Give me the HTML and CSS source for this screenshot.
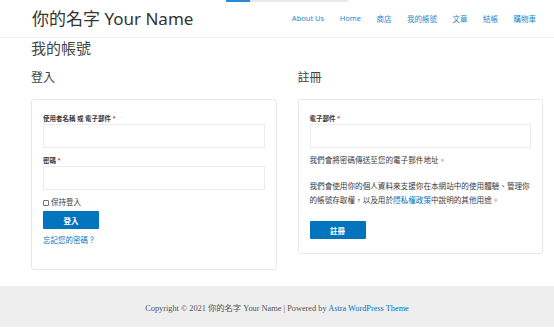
FILE: index.html
```html
<!DOCTYPE html>
<html>
    <head>
        <title>我的帳號 - 你的名字 Your Name</title>
        <meta charset="UTF-8">
        <meta name="viewport" content="width=device-width, initial-scale=1.0">
        <link rel="stylesheet" href="styles.css">
    </head>
    <body>
        <div class="top-progress">
            <span class="progress-done"></span>
            <span class="progress-rest"></span>
        </div>

        <header class="site-header">
            <a class="site-title" href="#">你的名字 Your Name</a>
            <nav class="main-nav">
                <a href="#">About Us</a>
                <a href="#">Home</a>
                <a href="#">商店</a>
                <a href="#">我的帳號</a>
                <a href="#">文章</a>
                <a href="#">結帳</a>
                <a href="#">購物車</a>
            </nav>
        </header>

        <main class="content">
            <h1 class="page-title">我的帳號</h1>

            <div class="account-cols">
                <section class="account-col">
                    <h2>登入</h2>
                    <form class="account-card">
                        <label>使用者名稱 或 電子郵件 <span class="required">*</span></label>
                        <input type="text" class="field">
                        <label>密碼 <span class="required">*</span></label>
                        <input type="password" class="field">
                        <div class="remember">
                            <input type="checkbox">
                            <span>保持登入</span>
                        </div>
                        <button type="button">登入</button>
                        <p class="lost-password"><a href="#">忘記您的密碼？</a></p>
                    </form>
                </section>

                <section class="account-col">
                    <h2>註冊</h2>
                    <form class="account-card">
                        <label>電子郵件 <span class="required">*</span></label>
                        <input type="email" class="field">
                        <p class="note">我們會將密碼傳送至您的電子郵件地址。</p>
                        <p class="privacy">我們會使用你的個人資料來支援你在本網站中的使用體驗、管理你的帳號存取權，以及用於<a href="#">隱私權政策</a>中說明的其他用途。</p>
                        <button type="button" class="register-btn">註冊</button>
                    </form>
                </section>
            </div>
        </main>

        <footer class="site-footer">
            <p>Copyright © 2021 你的名字 Your Name | Powered by <a href="#">Astra WordPress Theme</a></p>
        </footer>
    </body>
</html>
```

FILE: styles.css
```css
:root {
    --link-color: #0274be;
    --text-color: #3a3a3a;
    --border-color: #e8e8e8;
}

* {
    box-sizing: border-box;
    margin: 0;
    padding: 0;
}

body {
    font-family: 'Liberation Serif', 'Noto Sans CJK TC', serif;
    color: var(--text-color);
    background: #fff;
    font-size: 8px;
}

a {
    color: var(--link-color);
    text-decoration: none;
}

.top-progress {
    position: absolute;
    top: 0;
    left: 226px;
    display: flex;
    height: 2px;
}

.progress-done {
    width: 24px;
    background: #2b8ad8;
}

.progress-rest {
    width: 98px;
    background: #e9e9e9;
}

.site-header {
    display: flex;
    align-items: center;
    justify-content: space-between;
    height: 38px;
    padding: 0 18px 0 32px;
    border-bottom: 1px solid #efefef;
}

.site-title {
    font-family: 'Noto Sans', 'Noto Sans CJK TC', sans-serif;
    font-size: 17px;
    color: #333;
    line-height: 1;
}

.main-nav {
    display: flex;
    gap: 15.5px;
    font-family: 'Noto Sans', 'Noto Sans CJK TC', sans-serif;
    font-size: 7.5px;
}

.main-nav a {
    color: #2a87c9;
}

.content {
    padding: 0 11px 0 31px;
}

.page-title {
    font-family: 'Noto Sans CJK TC', sans-serif;
    font-weight: 400;
    font-size: 15px;
    line-height: 20px;
    color: #444;
}

.account-cols {
    display: grid;
    grid-template-columns: 1fr 1fr;
    gap: 21px;
    align-items: start;
}

.account-col h2 {
    font-family: 'Noto Sans CJK TC', sans-serif;
    font-weight: 400;
    font-size: 12px;
    line-height: 16px;
    margin: 11px 0 14px;
    color: #444;
}

.account-card {
    display: flex;
    flex-direction: column;
    align-items: flex-start;
    border: 1px solid var(--border-color);
    border-radius: 3px;
    padding: 13px 11px 14px;
}

.account-card label {
    font-family: 'Noto Sans CJK TC', sans-serif;
    font-size: 6.5px;
    font-weight: 700;
    line-height: 11px;
}

.required {
    color: #e2401c;
}

.field {
    width: 100%;
    height: 24px;
    border: 1px solid #ececec;
    background: #fff;
    margin-bottom: 7px;
}

.remember {
    display: flex;
    align-items: center;
    gap: 2px;
    margin-top: 1px;
    line-height: 10px;
    font-size: 7.5px;
}

.remember input {
    appearance: none;
    width: 6px;
    height: 6px;
    margin: 0;
    border: 1px solid #707070;
    border-radius: 1px;
    background: #fff;
}

.account-card button {
    width: 56px;
    height: 18px;
    margin-top: 3px;
    border: none;
    border-radius: 1px;
    background: var(--link-color);
    color: #fff;
    font-family: 'Noto Sans CJK TC', sans-serif;
    font-size: 7.5px;
    font-weight: 700;
}

.lost-password {
    margin: 7px 0 9px;
    line-height: 10px;
    font-size: 7.5px;
}

.note,
.privacy {
    font-size: 7.6px;
    line-height: 14px;
}

.note {
    margin-top: -1px;
}

.privacy {
    margin: 12px -4px 0 0;
}

.account-card .register-btn {
    margin-top: 13px;
}

.site-footer {
    margin-top: 16px;
    height: 41px;
    background: #eeeeee;
    display: flex;
    align-items: center;
    justify-content: center;
    font-size: 8.3px;
    color: #555;
}
```
